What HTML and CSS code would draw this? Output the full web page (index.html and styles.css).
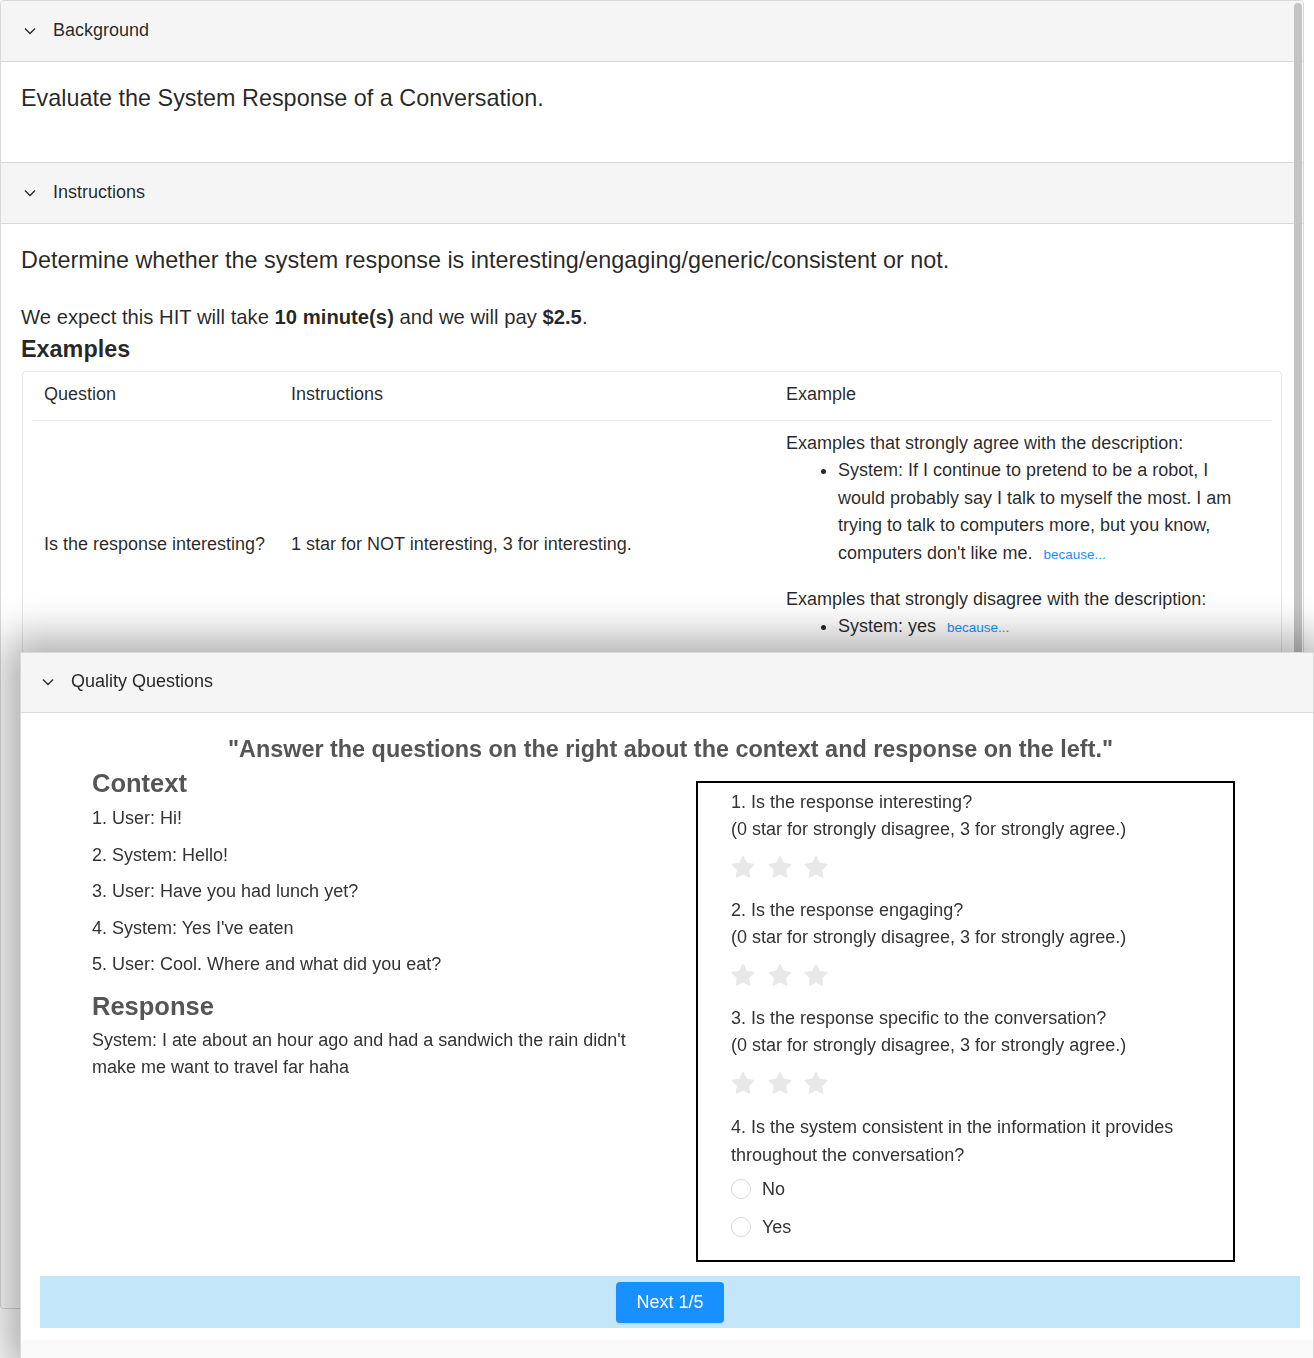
FILE: index.html
```html
<!DOCTYPE html>
<html lang="en">
<head>
<meta charset="utf-8">
<title>Evaluate the System Response</title>
<link rel="stylesheet" href="styles.css">
</head>
<body>
<div class="collapse">
  <section class="item">
    <div class="header">
      <svg class="arrow" viewBox="0 0 12 8" width="12" height="8"><polyline points="1,1.5 6,6.5 11,1.5" fill="none" stroke="currentColor" stroke-width="1.3"/></svg>
      <span>Background</span>
    </div>
    <div class="content bg-content">
      <p class="lead">Evaluate the System Response of a Conversation.</p>
    </div>
  </section>
  <section class="item">
    <div class="header">
      <svg class="arrow" viewBox="0 0 12 8" width="12" height="8"><polyline points="1,1.5 6,6.5 11,1.5" fill="none" stroke="currentColor" stroke-width="1.3"/></svg>
      <span>Instructions</span>
    </div>
    <div class="content instr-content">
      <p class="lead">Determine whether the system response is interesting/engaging/generic/consistent or not.</p>
      <p class="pay">We expect this HIT will take <b>10 minute(s)</b> and we will pay <b>$2.5</b>.</p>
      <h3 class="examples-title">Examples</h3>
      <div class="table-card">
        <table class="ex-table">
          <thead>
            <tr><th class="c1">Question</th><th class="c2">Instructions</th><th class="c3">Example</th></tr>
          </thead>
          <tbody>
            <tr>
              <td>Is the response interesting?</td>
              <td>1 star for NOT interesting, 3 for interesting.</td>
              <td class="ex-cell">
                <div>Examples that strongly agree with the description:</div>
                <ul>
                  <li>System: If I continue to pretend to be a robot, I would probably say I talk to myself the most. I am trying to talk to computers more, but you know, computers don't like me. <a class="because">because...</a></li>
                </ul>
                <div>Examples that strongly disagree with the description:</div>
                <ul>
                  <li>System: yes <a class="because">because...</a></li>
                </ul>
              </td>
            </tr>
          </tbody>
        </table>
      </div>
    </div>
  </section>
  <div class="scroll-thumb"></div>
</div>

<div class="panel">
  <div class="header panel-header">
    <svg class="arrow" viewBox="0 0 12 8" width="12" height="8"><polyline points="1,1.5 6,6.5 11,1.5" fill="none" stroke="currentColor" stroke-width="1.3"/></svg>
    <span>Quality Questions</span>
  </div>
  <div class="panel-body">
    <div class="quote">"Answer the questions on the right about the context and response on the left."</div>
    <div class="qa-row">
      <div class="left-col">
        <h2 class="sub">Context</h2>
        <div class="turn">1. User: Hi!</div>
        <div class="turn">2. System: Hello!</div>
        <div class="turn">3. User: Have you had lunch yet?</div>
        <div class="turn">4. System: Yes I've eaten</div>
        <div class="turn">5. User: Cool. Where and what did you eat?</div>
        <h2 class="sub response-title">Response</h2>
        <p class="response">System: I ate about an hour ago and had a sandwich the rain didn't make me want to travel far haha</p>
      </div>
      <div class="right-col">
        <div class="q-box">
          <div class="q">
            <div class="q-text">1. Is the response interesting?<br>(0 star for strongly disagree, 3 for strongly agree.)</div>
            <div class="stars">
              <svg class="star" viewBox="64 64 896 896"><path d="M908.1 353.1l-253.9-36.9L540.7 86.1c-3.1-6.3-8.2-11.4-14.5-14.5-15.8-7.8-35-1.3-42.9 14.5L369.8 316.2l-253.9 36.9c-7 1-13.4 4.3-18.3 9.3a32.05 32.05 0 00.6 45.3l183.7 179.1-43.4 252.9a31.95 31.95 0 0046.4 33.7L512 754l227.1 119.4c6.2 3.3 13.4 4.4 20.3 3.2 17.4-3 29.1-19.5 26.1-36.9l-43.4-252.9 183.7-179.1c5-4.9 8.3-11.3 9.3-18.3 2.7-17.5-9.5-33.7-27-36.3z"/></svg>
              <svg class="star" viewBox="64 64 896 896"><path d="M908.1 353.1l-253.9-36.9L540.7 86.1c-3.1-6.3-8.2-11.4-14.5-14.5-15.8-7.8-35-1.3-42.9 14.5L369.8 316.2l-253.9 36.9c-7 1-13.4 4.3-18.3 9.3a32.05 32.05 0 00.6 45.3l183.7 179.1-43.4 252.9a31.95 31.95 0 0046.4 33.7L512 754l227.1 119.4c6.2 3.3 13.4 4.4 20.3 3.2 17.4-3 29.1-19.5 26.1-36.9l-43.4-252.9 183.7-179.1c5-4.9 8.3-11.3 9.3-18.3 2.7-17.5-9.5-33.7-27-36.3z"/></svg>
              <svg class="star" viewBox="64 64 896 896"><path d="M908.1 353.1l-253.9-36.9L540.7 86.1c-3.1-6.3-8.2-11.4-14.5-14.5-15.8-7.8-35-1.3-42.9 14.5L369.8 316.2l-253.9 36.9c-7 1-13.4 4.3-18.3 9.3a32.05 32.05 0 00.6 45.3l183.7 179.1-43.4 252.9a31.95 31.95 0 0046.4 33.7L512 754l227.1 119.4c6.2 3.3 13.4 4.4 20.3 3.2 17.4-3 29.1-19.5 26.1-36.9l-43.4-252.9 183.7-179.1c5-4.9 8.3-11.3 9.3-18.3 2.7-17.5-9.5-33.7-27-36.3z"/></svg>
            </div>
          </div>
          <div class="q">
            <div class="q-text">2. Is the response engaging?<br>(0 star for strongly disagree, 3 for strongly agree.)</div>
            <div class="stars">
              <svg class="star" viewBox="64 64 896 896"><path d="M908.1 353.1l-253.9-36.9L540.7 86.1c-3.1-6.3-8.2-11.4-14.5-14.5-15.8-7.8-35-1.3-42.9 14.5L369.8 316.2l-253.9 36.9c-7 1-13.4 4.3-18.3 9.3a32.05 32.05 0 00.6 45.3l183.7 179.1-43.4 252.9a31.95 31.95 0 0046.4 33.7L512 754l227.1 119.4c6.2 3.3 13.4 4.4 20.3 3.2 17.4-3 29.1-19.5 26.1-36.9l-43.4-252.9 183.7-179.1c5-4.9 8.3-11.3 9.3-18.3 2.7-17.5-9.5-33.7-27-36.3z"/></svg>
              <svg class="star" viewBox="64 64 896 896"><path d="M908.1 353.1l-253.9-36.9L540.7 86.1c-3.1-6.3-8.2-11.4-14.5-14.5-15.8-7.8-35-1.3-42.9 14.5L369.8 316.2l-253.9 36.9c-7 1-13.4 4.3-18.3 9.3a32.05 32.05 0 00.6 45.3l183.7 179.1-43.4 252.9a31.95 31.95 0 0046.4 33.7L512 754l227.1 119.4c6.2 3.3 13.4 4.4 20.3 3.2 17.4-3 29.1-19.5 26.1-36.9l-43.4-252.9 183.7-179.1c5-4.9 8.3-11.3 9.3-18.3 2.7-17.5-9.5-33.7-27-36.3z"/></svg>
              <svg class="star" viewBox="64 64 896 896"><path d="M908.1 353.1l-253.9-36.9L540.7 86.1c-3.1-6.3-8.2-11.4-14.5-14.5-15.8-7.8-35-1.3-42.9 14.5L369.8 316.2l-253.9 36.9c-7 1-13.4 4.3-18.3 9.3a32.05 32.05 0 00.6 45.3l183.7 179.1-43.4 252.9a31.95 31.95 0 0046.4 33.7L512 754l227.1 119.4c6.2 3.3 13.4 4.4 20.3 3.2 17.4-3 29.1-19.5 26.1-36.9l-43.4-252.9 183.7-179.1c5-4.9 8.3-11.3 9.3-18.3 2.7-17.5-9.5-33.7-27-36.3z"/></svg>
            </div>
          </div>
          <div class="q">
            <div class="q-text">3. Is the response specific to the conversation?<br>(0 star for strongly disagree, 3 for strongly agree.)</div>
            <div class="stars">
              <svg class="star" viewBox="64 64 896 896"><path d="M908.1 353.1l-253.9-36.9L540.7 86.1c-3.1-6.3-8.2-11.4-14.5-14.5-15.8-7.8-35-1.3-42.9 14.5L369.8 316.2l-253.9 36.9c-7 1-13.4 4.3-18.3 9.3a32.05 32.05 0 00.6 45.3l183.7 179.1-43.4 252.9a31.95 31.95 0 0046.4 33.7L512 754l227.1 119.4c6.2 3.3 13.4 4.4 20.3 3.2 17.4-3 29.1-19.5 26.1-36.9l-43.4-252.9 183.7-179.1c5-4.9 8.3-11.3 9.3-18.3 2.7-17.5-9.5-33.7-27-36.3z"/></svg>
              <svg class="star" viewBox="64 64 896 896"><path d="M908.1 353.1l-253.9-36.9L540.7 86.1c-3.1-6.3-8.2-11.4-14.5-14.5-15.8-7.8-35-1.3-42.9 14.5L369.8 316.2l-253.9 36.9c-7 1-13.4 4.3-18.3 9.3a32.05 32.05 0 00.6 45.3l183.7 179.1-43.4 252.9a31.95 31.95 0 0046.4 33.7L512 754l227.1 119.4c6.2 3.3 13.4 4.4 20.3 3.2 17.4-3 29.1-19.5 26.1-36.9l-43.4-252.9 183.7-179.1c5-4.9 8.3-11.3 9.3-18.3 2.7-17.5-9.5-33.7-27-36.3z"/></svg>
              <svg class="star" viewBox="64 64 896 896"><path d="M908.1 353.1l-253.9-36.9L540.7 86.1c-3.1-6.3-8.2-11.4-14.5-14.5-15.8-7.8-35-1.3-42.9 14.5L369.8 316.2l-253.9 36.9c-7 1-13.4 4.3-18.3 9.3a32.05 32.05 0 00.6 45.3l183.7 179.1-43.4 252.9a31.95 31.95 0 0046.4 33.7L512 754l227.1 119.4c6.2 3.3 13.4 4.4 20.3 3.2 17.4-3 29.1-19.5 26.1-36.9l-43.4-252.9 183.7-179.1c5-4.9 8.3-11.3 9.3-18.3 2.7-17.5-9.5-33.7-27-36.3z"/></svg>
            </div>
          </div>
          <div class="q last">
            <div class="q-text q4">4. Is the system consistent in the information it provides throughout the conversation?</div>
            <label class="radio first"><span class="radio-dot"></span><span class="radio-label">No</span></label>
            <label class="radio"><span class="radio-dot"></span><span class="radio-label">Yes</span></label>
          </div>
        </div>
      </div>
    </div>
    <div class="next-bar"><button class="next-btn">Next 1/5</button></div>
    <div class="bottom-strip"></div>
  </div>
</div>
</body>
</html>
```
FILE: styles.css
```css
* { box-sizing: border-box; }
html, body { margin: 0; padding: 0; }
body {
  font-family: "Liberation Sans", Arial, Helvetica, sans-serif;
  font-size: 18px;
  line-height: 1.5;
  color: rgba(0, 0, 0, 0.85);
  background: #fff;
  overflow: hidden;
  height: 1358px;
}

/* main collapse */
.collapse {
  position: relative;
  width: 1304px;
  height: 1309px;
  border: 1px solid #d9d9d9;
  border-radius: 4px;
  overflow: hidden;
  background: #fff;
}
.header {
  display: flex;
  align-items: center;
  height: 61px;
  padding-left: 23px;
  padding-bottom: 3px;
  background: #f5f5f5;
  border-bottom: 1px solid #d9d9d9;
  font-size: 18px;
  line-height: 28px;
  color: rgba(0, 0, 0, 0.85);
}
.arrow {
  flex: none;
  width: 12px;
  height: 8px;
  margin-right: 17px;
  margin-top: 3px;
}
.content {
  padding: 19px 20px 0 20px;
}
.bg-content {
  height: 101px;
  border-bottom: 1px solid #d9d9d9;
}
.lead {
  margin: 0;
  font-size: 23.4px;
  line-height: 35px;
}
.pay {
  margin: 24px 0 0;
  font-size: 20.25px;
  line-height: 30px;
}
.examples-title {
  margin: 0;
  font-size: 23.4px;
  line-height: 35px;
  font-weight: bold;
}
.table-card {
  margin: 4px 0 0 1px;
  width: 1260px;
  border: 1px solid #e8e8e8;
  border-radius: 4px;
  padding: 0 10px;
}
.ex-table {
  width: 100%;
  border-collapse: collapse;
  font-size: 18px;
  line-height: 27px;
}
.ex-table th {
  font-weight: normal;
  text-align: left;
  padding: 9px 11px 12px;
  border-bottom: 1px solid #e8e8e8;
}
.ex-table .c1 { width: 247px; }
.ex-table .c2 { width: 495px; }
.ex-table td {
  padding: 9px 11px 10px;
  vertical-align: middle;
}
.ex-cell { line-height: 27.4px; }
.ex-cell ul {
  margin: 0 0 19px;
  padding-left: 52px;
}
.because {
  color: #1890ff;
  font-size: 13.5px;
  line-height: 1;
  margin-left: 6px;
}
.scroll-thumb {
  position: absolute;
  top: 2px;
  right: 1px;
  width: 8px;
  height: 1400px;
  border-radius: 4px;
  background: #c4c4c4;
}

/* overlay panel */
.panel {
  position: fixed;
  left: 20px;
  right: 0;
  bottom: 0;
  height: 706px;
  display: flex;
  flex-direction: column;
  background: #fff;
  border: 1px solid #d9d9d9;
  border-bottom: none;
  box-shadow: 0 0 40px 14px rgba(0, 0, 0, 0.33);
}
.panel-header {
  height: 60px;
  padding-left: 21px;
  padding-bottom: 4px;
}
.panel-header .arrow { margin-right: 17px; }
.panel-body {
  flex: 1;
  display: flex;
  flex-direction: column;
  padding: 20px 12px 0 19px;
}
.quote {
  text-align: center;
  font-size: 23.4px;
  line-height: 32px;
  font-weight: bold;
  color: #555;
}
.qa-row {
  display: flex;
  margin-top: 2px;
}
.left-col {
  width: 630px;
  flex: none;
  padding-left: 52px;
  color: #333;
}
.sub {
  margin: 0;
  font-size: 25.5px;
  line-height: 33px;
  font-weight: bold;
  color: #555;
}
.turn {
  line-height: 36.5px;
}
.response-title { margin-top: 7px; }
.response {
  margin: 4px 0 0;
  line-height: 27px;
}
.right-col {
  flex: 1;
}
.q-box {
  margin: 14px 0 0 26px;
  width: 539px;
  border: 2px solid #000;
  padding: 6px 20px 14px 33px;
  color: #333;
}
.q-text { line-height: 27px; }
.q-text.q4 { line-height: 28px; margin-top: 1px; }
.stars {
  display: flex;
  gap: 12.5px;
  margin: 13px 0 17px;
  height: 24px;
}
.star {
  width: 24px;
  height: 24px;
  fill: #e8e8e8;
}
.radio {
  display: flex;
  align-items: center;
  height: 38px;
}
.radio.first { margin-top: 1px; }
.radio-dot {
  width: 20px;
  height: 20px;
  border: 1px solid #d9d9d9;
  border-radius: 50%;
  background: #fff;
}
.radio-label {
  margin-left: 11px;
}
.next-bar {
  margin-top: 14px;
  width: 1260px;
  height: 52px;
  background: #c3e6f8;
  display: flex;
  align-items: center;
  justify-content: center;
}
.next-btn {
  height: 41px;
  padding: 0 20px;
  border: none;
  border-radius: 4px;
  background: #1890ff;
  color: #fff;
  font-family: inherit;
  font-size: 18px;
  line-height: 27px;
  box-shadow: 0 2px 0 rgba(0, 0, 0, 0.045);
}
.bottom-strip {
  margin: 12px -12px 0 -19px;
  flex: 1;
  background: #fafafa;
}
```
